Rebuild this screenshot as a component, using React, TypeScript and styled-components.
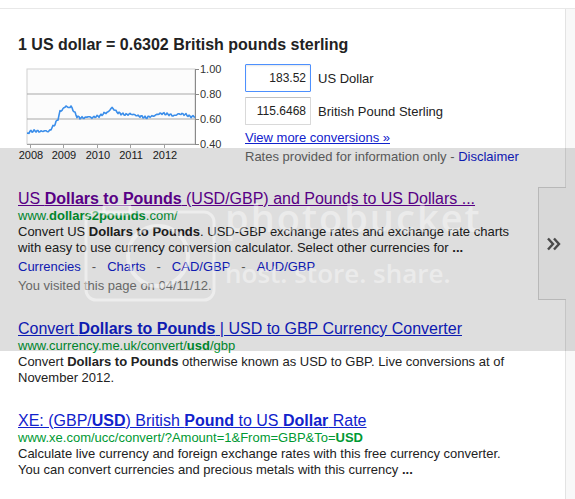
import React from "react";
import styled, { createGlobalStyle } from "styled-components";

const GlobalStyle = createGlobalStyle`
  html, body {
    margin: 0;
    padding: 0;
    background: #fff;
  }
  body {
    font-family: "Liberation Sans", Arial, sans-serif;
    color: #222;
  }
  b { font-weight: bold; }
`;

// rough shape of the USD/GBP line, page x -> value
const keys: [number, number][] = [
  [27, 0.48], [30, 0.5], [35, 0.505], [40, 0.5], [45, 0.505], [49, 0.5],
  [52, 0.53], [55, 0.56], [58, 0.6], [60, 0.66], [63, 0.68], [66, 0.705],
  [68, 0.69], [71, 0.7], [74, 0.66], [77, 0.62], [80, 0.61], [85, 0.61],
  [88, 0.62], [92, 0.61], [96, 0.62], [100, 0.625], [104, 0.645], [108, 0.655],
  [110, 0.675], [112, 0.69], [115, 0.67], [118, 0.65], [122, 0.64], [126, 0.635],
  [130, 0.64], [134, 0.635], [138, 0.625], [142, 0.62], [146, 0.61], [150, 0.62],
  [154, 0.625], [158, 0.64], [162, 0.645], [166, 0.64], [170, 0.635], [174, 0.625],
  [178, 0.64], [182, 0.64], [186, 0.635], [190, 0.62], [195, 0.62],
];

const toY = (v: number) => 7 + ((1 - v) / 0.6) * 75;

const buildLine = () => {
  const pts: string[] = [];
  let k = 0;
  for (let x = 27; x <= 195; x += 1) {
    while (k < keys.length - 2 && keys[k + 1][0] < x) k++;
    const [x0, v0] = keys[k];
    const [x1, v1] = keys[k + 1];
    const t = Math.min(1, Math.max(0, (x - x0) / (x1 - x0)));
    const v = v0 + (v1 - v0) * t + 0.006 * Math.sin(x * 1.7) + 0.004 * Math.sin(x * 4.3);
    pts.push(`${x - 18},${toY(v).toFixed(1)}`);
  }
  return pts.join(" ");
};

const grid = [
  { label: "1.00", y: 7 },
  { label: "0.80", y: 32 },
  { label: "0.60", y: 57 },
  { label: "0.40", y: 82 },
];

const years = [
  { label: "2008", x: 13 },
  { label: "2009", x: 46 },
  { label: "2010", x: 80 },
  { label: "2011", x: 113 },
  { label: "2012", x: 147 },
];

const RateChart = () => (
  <ChartSvg width={210} height={100} viewBox="0 0 210 100">
    <rect x={9} y={7} width={168} height={75} fill="#fcfcfc" stroke="#d0d0d0" />
    <line x1={9} y1={32} x2={177} y2={32} stroke="#a8a8a8" />
    <line x1={9} y1={57} x2={177} y2={57} stroke="#a8a8a8" />
    <line x1={9} y1={82.5} x2={177} y2={82.5} stroke="#a0a0a0" />
    <line x1={177.5} y1={7} x2={177.5} y2={83} stroke="#8a8a8a" />
    {grid.map((g) => (
      <g key={g.label}>
        <line x1={177} y1={g.y + 0.5} x2={181} y2={g.y + 0.5} stroke="#8a8a8a" />
        <text x={182} y={g.y + 4} fontSize={11} fill="#333" fontFamily="Liberation Sans, Arial, sans-serif">
          {g.label}
        </text>
      </g>
    ))}
    {years.map((y) => (
      <g key={y.label}>
        <line x1={y.x - 0.5} y1={82} x2={y.x - 0.5} y2={86} stroke="#a0a0a0" />
        <text x={y.x} y={97} fontSize={11} fill="#222" textAnchor="middle" fontFamily="Liberation Sans, Arial, sans-serif">
          {y.label}
        </text>
      </g>
    ))}
    <polyline points={buildLine()} fill="none" stroke="#3b8eea" strokeWidth={1.6} strokeLinejoin="round" />
  </ChartSvg>
);

const Camera = () => (
  <CameraSvg width={132} height={100} viewBox="0 0 132 100">
    <rect x={2} y={8} width={128} height={88} rx={10} fill="none" stroke="rgba(255,255,255,0.45)" strokeWidth={3} />
    <rect x={20} y={1} width={26} height={9} rx={2} fill="none" stroke="rgba(255,255,255,0.45)" strokeWidth={3} />
    <circle cx={74} cy={52} r={30} fill="none" stroke="rgba(255,255,255,0.45)" strokeWidth={4} />
  </CameraSvg>
);

const Chevrons = () => (
  <svg width={14} height={14} viewBox="0 0 14 14">
    <path d="M1 1.5 L6 7 L1 12.5 M7 1.5 L12 7 L7 12.5" fill="none" stroke="#555" strokeWidth={2.4} />
  </svg>
);

export default function App() {
  return (
    <>
      <GlobalStyle />
      <Page>
        <TopBar />
        <Body>
          <Main>
            <Heading>1 US dollar = 0.6302 British pounds sterling</Heading>
            <Converter>
              <RateChart />
              <ConvertColumn>
                <AmountRow>
                  <AmountInput $focused defaultValue="183.52" />
                  <CurrencyName>US Dollar</CurrencyName>
                </AmountRow>
                <AmountRow>
                  <AmountInput defaultValue="115.6468" />
                  <CurrencyName>British Pound Sterling</CurrencyName>
                </AmountRow>
                <MoreLink href="#">View more conversions »</MoreLink>
                <Disclaimer>
                  Rates provided for information only - <DisclaimerLink href="#">Disclaimer</DisclaimerLink>
                </Disclaimer>
              </ConvertColumn>
            </Converter>

            <Results>
              <Result>
                <ResultTitle href="#" $visited>
                  US <b>Dollars to Pounds</b> (USD/GBP) and Pounds to US Dollars ...
                </ResultTitle>
                <Url>
                  www.<b>dollars2pounds</b>.com/
                </Url>
                <Snippet>
                  Convert US <b>Dollars to Pounds</b>. USD-GBP exchange rates and exchange rate charts
                  <br />
                  with easy to use currency conversion calculator. Select other currencies for <b>...</b>
                </Snippet>
                <Sitelinks>
                  <SiteLink href="#">Currencies</SiteLink>
                  <Sep>-</Sep>
                  <SiteLink href="#">Charts</SiteLink>
                  <Sep>-</Sep>
                  <SiteLink href="#">CAD/GBP</SiteLink>
                  <Sep>-</Sep>
                  <SiteLink href="#">AUD/GBP</SiteLink>
                </Sitelinks>
                <Visited>You visited this page on 04/11/12.</Visited>
              </Result>

              <Result>
                <ResultTitle href="#">
                  Convert <b>Dollars to Pounds</b> | USD to GBP Currency Converter
                </ResultTitle>
                <Url>
                  www.currency.me.uk/convert/<b>usd</b>/gbp
                </Url>
                <Snippet>
                  Convert <b>Dollars to Pounds</b> otherwise known as USD to GBP. Live conversions at of
                  <br />
                  November 2012.
                </Snippet>
              </Result>

              <Result>
                <ResultTitle href="#">
                  XE: (GBP/<b>USD</b>) British <b>Pound</b> to US <b>Dollar</b> Rate
                </ResultTitle>
                <Url>
                  www.xe.com/ucc/convert/?Amount=1&amp;From=GBP&amp;To=<b>USD</b>
                </Url>
                <Snippet>
                  Calculate live currency and foreign exchange rates with this free currency converter.
                  <br />
                  You can convert currencies and precious metals with this currency <b>...</b>
                </Snippet>
              </Result>
            </Results>

            <MoreTab>
              <Chevrons />
            </MoreTab>
          </Main>
          <Rail />
        </Body>

        <Watermark>
          <Camera />
          <WatermarkText>
            <WatermarkBrand>photobucket</WatermarkBrand>
            <WatermarkTagline>host. store. share.</WatermarkTagline>
          </WatermarkText>
        </Watermark>
      </Page>
    </>
  );
}

const Page = styled.div`
  position: relative;
  width: 575px;
  height: 499px;
  overflow: hidden;
  display: flex;
  flex-direction: column;
`;

const TopBar = styled.div`
  height: 8px;
  flex-shrink: 0;
  border-bottom: 1px solid #e8e8e8;
`;

const Body = styled.div`
  flex: 1;
  display: flex;
`;

const Main = styled.div`
  position: relative;
  width: 547px;
  padding-left: 18px;
  border-right: 1px solid #e3e3e3;
`;

const Rail = styled.div`
  flex: 1;
  background: #f8f8f8;
`;

const Heading = styled.h2`
  margin: 26px 0 0;
  font-size: 16px;
  line-height: 20px;
  font-weight: bold;
  color: #222;
`;

const Converter = styled.div`
  display: flex;
  align-items: flex-start;
  margin-top: 7px;
`;

const ChartSvg = styled.svg`
  display: block;
  flex-shrink: 0;
`;

const ConvertColumn = styled.div`
  display: flex;
  flex-direction: column;
  margin-left: 17px;
  padding-top: 2px;
`;

const AmountRow = styled.div`
  display: flex;
  align-items: center;
  & + & {
    margin-top: 5px;
  }
`;

const AmountInput = styled.input<{ $focused?: boolean }>`
  box-sizing: border-box;
  width: 66px;
  height: 28px;
  padding: 0 4px 0 2px;
  border: 1px solid ${(p) => (p.$focused ? "#4d90fe" : "#d9d9d9")};
  border-top-color: ${(p) => (p.$focused ? "#4d90fe" : "#c0c0c0")};
  box-shadow: ${(p) => (p.$focused ? "inset 0 1px 2px rgba(0,0,0,0.1)" : "none")};
  border-radius: 1px;
  font-family: "Liberation Sans", Arial, sans-serif;
  font-size: 12px;
  color: #222;
  text-align: right;
  outline: none;
  background: #fff;
`;

const CurrencyName = styled.span`
  margin-left: 7px;
  font-size: 13px;
  color: #222;
`;

const MoreLink = styled.a`
  margin-top: 5px;
  font-size: 13px;
  line-height: 16px;
  color: #12c;
  text-decoration: underline;
`;

const Disclaimer = styled.div`
  margin-top: 3px;
  font-size: 13px;
  line-height: 16px;
  color: #666;
`;

const DisclaimerLink = styled.a`
  color: #12c;
  text-decoration: none;
`;

const Results = styled.div`
  margin-top: 24px;
  display: flex;
  flex-direction: column;
  gap: 25px;
`;

const Result = styled.div`
  display: flex;
  flex-direction: column;
`;

const ResultTitle = styled.a<{ $visited?: boolean }>`
  font-size: 16px;
  line-height: 19px;
  color: ${(p) => (p.$visited ? "#609" : "#12c")};
  text-decoration: underline;
  white-space: nowrap;
`;

const Url = styled.div`
  font-size: 13px;
  line-height: 16px;
  color: #093;
  white-space: nowrap;
`;

const Snippet = styled.div`
  font-size: 13px;
  line-height: 16px;
  color: #222;
  white-space: nowrap;
`;

const Sitelinks = styled.div`
  display: flex;
  margin-top: 3px;
  font-size: 13px;
  line-height: 16px;
`;

const SiteLink = styled.a`
  color: #12c;
  text-decoration: none;
`;

const Sep = styled.span`
  padding: 0 11px;
  color: #666;
`;

const Visited = styled.div`
  margin-top: 3px;
  font-size: 13px;
  line-height: 16px;
  color: #777;
`;

const MoreTab = styled.div`
  position: absolute;
  top: 178px;
  right: -1px;
  box-sizing: border-box;
  width: 28px;
  height: 113px;
  display: flex;
  align-items: center;
  justify-content: center;
  padding-left: 3px;
  background: #f8f8f8;
  border: 1px solid #d4d4d4;
  border-right: none;
`;

const Watermark = styled.div`
  position: absolute;
  left: 0;
  right: 0;
  top: 148px;
  height: 203px;
  display: flex;
  align-items: flex-start;
  padding-left: 84px;
  background: rgba(0, 0, 0, 0.13);
  pointer-events: none;
`;

const CameraSvg = styled.svg`
  display: block;
  margin-top: 56px;
  flex-shrink: 0;
`;

const WatermarkText = styled.div`
  display: flex;
  flex-direction: column;
  margin-left: 9px;
  padding-top: 47px;
  font-family: "Open Sans", sans-serif;
  color: rgba(255, 255, 255, 0.42);
`;

const WatermarkBrand = styled.div`
  font-size: 38px;
  line-height: 44px;
  font-weight: 600;
  letter-spacing: 2px;
`;

const WatermarkTagline = styled.div`
  margin-top: 19px;
  font-size: 26px;
  line-height: 30px;
  font-weight: 600;
`;
